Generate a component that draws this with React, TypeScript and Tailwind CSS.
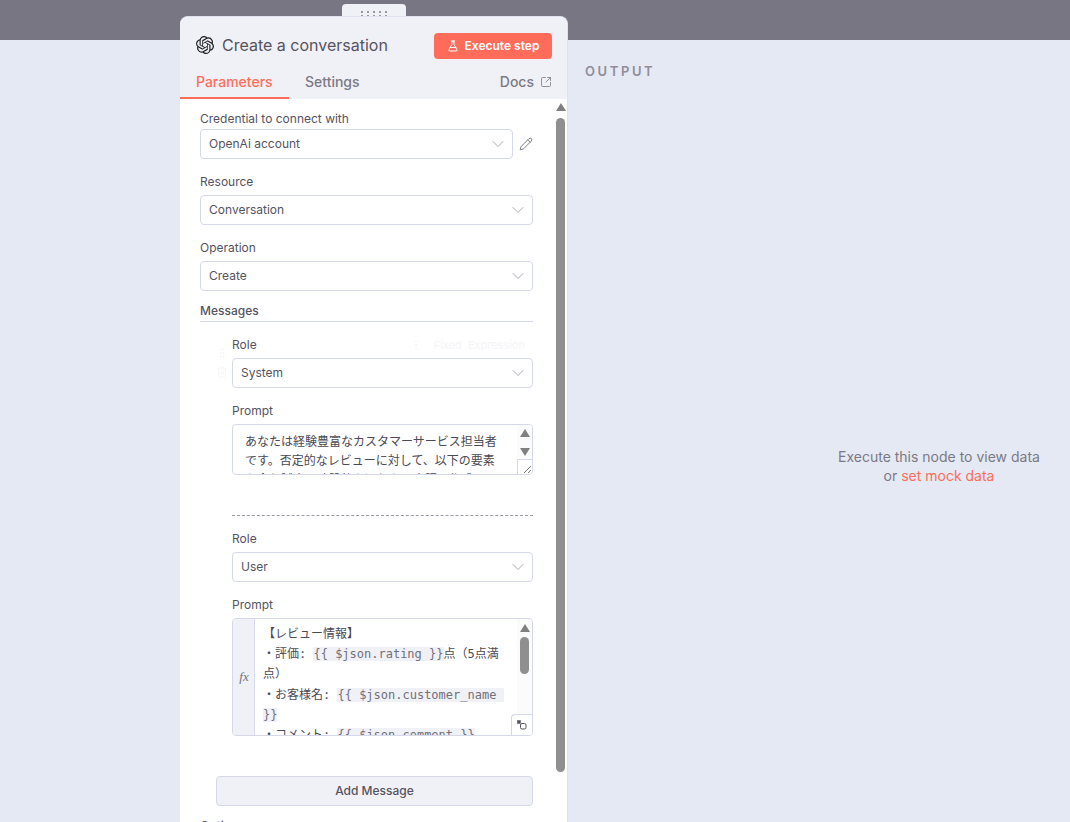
import { ChevronDown, FlaskConical, Pencil, SquareArrowOutUpRight, GripVertical, Trash2, EllipsisVertical } from 'lucide-react'
import { SiOpenai } from 'react-icons/si'

const Triangle = ({ down, className = '' }: { down?: boolean; className?: string }) => (
  <svg width="10" height="8" viewBox="0 0 10 8" className={className}>
    <path d={down ? 'M0 0h10L5 8z' : 'M5 0l5 8H0z'} fill="#7f7f7f" />
  </svg>
)

function Select({ value, className = '' }: { value: string; className?: string }) {
  return (
    <div className={`flex h-[30px] items-center justify-between rounded-[4px] border border-[#d5d8e8] bg-white pl-2 pr-[4px] text-[12px] text-[#55535f] ${className}`}>
      <span>{value}</span>
      <ChevronDown size={20} strokeWidth={1} className="text-[#9a98a3]" />
    </div>
  )
}

const Label = ({ children, className = '' }: { children: string; className?: string }) => (
  <div className={`text-[12px] leading-[16px] text-[#55535f] ${className}`}>{children}</div>
)

const Expr = ({ children }: { children: string }) => (
  <span className="bg-[#f0f1f6] text-[#71707c]">{children}</span>
)

export default function App() {
  return (
    <div className="flex h-[822px] flex-col overflow-hidden bg-[#e5e9f3] font-['Inter','Noto_Sans_CJK_JP',sans-serif]">
      <div className="h-10 shrink-0 bg-[#787682]" />
      <div className="flex min-h-0 flex-1">
        <div className="-mt-9 ml-[180px] flex w-[388px] shrink-0 flex-col items-center">
          <div className="flex h-3 w-16 shrink-0 justify-center rounded-t-[4px] bg-[#f0f1f6] pt-[7px]">
            <div className="grid h-[6px] grid-cols-5 gap-x-[4px] gap-y-[2px]">
              {Array.from({ length: 10 }).map((_, i) => (
                <span key={i} className="h-[2px] w-[2px] bg-[#9a98a3]" />
              ))}
            </div>
          </div>
          <div className="flex w-full min-h-0 flex-1 flex-col overflow-hidden rounded-t-[8px] border-r border-t border-[#dfe2ee] bg-white">
            <div className="shrink-0 bg-[#f0f1f6]">
              <div className="flex items-center justify-between pl-[16px] pr-[15px] pt-[16px]">
                <div className="flex items-center gap-[8px] pb-[2px]">
                  <SiOpenai size={18} className="text-[#1f1e26]" />
                  <span className="text-[16px] font-normal leading-[24px] text-[#55535f]">Create a conversation</span>
                </div>
                <div className="flex h-[26px] w-[118px] items-center justify-center gap-[6px] rounded-[4px] bg-[#ff6d5a] text-[12px] font-semibold text-white">
                  <FlaskConical size={12} strokeWidth={2} />
                  <span>Execute step</span>
                </div>
              </div>
              <div className="mt-[10px] flex h-[30px] items-start justify-between pr-[15px]">
                <div className="flex h-[30px] text-[14px] font-medium">
                  <div className="w-[109px] border-b-2 border-[#ff6d5a] pl-[16px] pt-[3px] leading-[20px] text-[#ff6d5a]">Parameters</div>
                  <div className="pl-[16px] pt-[3px] leading-[20px] text-[#7b7985]">Settings</div>
                </div>
                <div className="flex items-center gap-[6px] pt-[3px] text-[14px] font-medium leading-[20px] text-[#7b7985]">
                  Docs
                  <SquareArrowOutUpRight size={12} strokeWidth={1.6} />
                </div>
              </div>
            </div>

            <div className="flex min-h-0 flex-1">
              <div className="w-[354px] shrink-0 pl-[20px] pt-[12px]">
                <Label>Credential to connect with</Label>
                <div className="mt-[2px] flex items-center">
                  <Select value="OpenAi account" className="w-[313px]" />
                  <Pencil size={14} strokeWidth={1.2} className="ml-[6px] text-[#4a4954]" />
                </div>
                <Label className="mt-[15px]">Resource</Label>
                <Select value="Conversation" className="mt-[5px] w-[333px]" />
                <Label className="mt-[15px]">Operation</Label>
                <Select value="Create" className="mt-[5px] w-[333px]" />
                <div className="mt-[12px] w-[333px] border-b border-[#d5d8e8] pb-[2px]">
                  <div className="text-[12px] font-medium leading-[16px] text-[#55535f]">Messages</div>
                </div>

                <div className="relative mt-[15px] ml-[32px] w-[301px]">
                  <div className="absolute -left-[16px] top-[10px] flex flex-col gap-[7px] text-[#f6f6f8]">
                    <GripVertical size={12} />
                    <Trash2 size={12} />
                  </div>
                  <div className="absolute right-[2px] top-0 flex items-center gap-[6px] text-[11px] text-[#f4f4f7]">
                    <EllipsisVertical size={12} />
                    <span className="rounded-[4px] px-[6px] leading-[16px]">Fixed &nbsp;Expression</span>
                  </div>
                  <Label>Role</Label>
                  <Select value="System" className="mt-[5px]" />
                  <Label className="mt-[15px]">Prompt</Label>
                  <div className="relative mt-[5px] h-[51px] overflow-hidden rounded-[4px] border border-[#d5d8e8] bg-white pl-[12px] pr-[31px] pt-[7px] text-[12px] leading-[19px] text-[#4a4954]">
                    あなたは経験豊富なカスタマーサービス担当者です。否定的なレビューに対して、以下の要素を含む誠実で建設的な返信を日本語で作成してください
                    <div className="absolute right-0 top-0 flex h-full w-[15px] flex-col items-center gap-[11px] bg-[#fbfbfb] pt-[4px]">
                      <Triangle />
                      <Triangle down />
                    </div>
                    <div className="absolute bottom-0 right-0 flex h-[15px] w-[15px] items-end justify-end border-l border-t border-[#d5d8e8] bg-white">
                      <svg width="10" height="10" viewBox="0 0 10 10" stroke="#777" strokeWidth="1"><path d="M9 2 2 9M9 6 6 9" /></svg>
                    </div>
                  </div>
                  <div className="mt-[40px] border-t border-dashed border-[#9b9aa4]" />
                  <Label className="mt-[15px]">Role</Label>
                  <Select value="User" className="mt-[5px]" />
                  <Label className="mt-[15px]">Prompt</Label>
                  <div className="relative mt-[5px] flex h-[118px] overflow-hidden rounded-[4px] border border-[#d5d8e8] bg-white">
                    <div className="flex w-[22px] shrink-0 items-center justify-center border-r border-[#d5d8e8] bg-[#f0f1f6] pl-[1px] font-['Liberation_Serif',serif] text-[13px] italic text-[#71707c]">fx</div>
                    <div className="w-[250px] pl-[8px] pt-[5px] font-['DejaVu_Sans_Mono','Noto_Sans_CJK_JP',monospace] text-[12px] leading-[20.2px] text-[#4a4954]">
                      <div>【レビュー情報】</div>
                      <div>・評価: <Expr>{'{{ $json.rating }}'}</Expr>点（5点満点）</div>
                      <div>・お客様名: <Expr>{'{{ $json.customer_name\u00a0'}</Expr><wbr /><Expr>{'}}'}</Expr></div>
                      <div>・コメント: <Expr>{'{{ $json.comment }}'}</Expr></div>
                    </div>
                    <div className="absolute right-0 top-0 flex h-full w-[15px] flex-col items-center bg-[#fbfbfb] pt-[5px]">
                      <Triangle />
                      <div className="mt-[5px] h-[37px] w-[9px] rounded-full bg-[#8f8f8f]" />
                    </div>
                    <div className="absolute bottom-0 right-0 flex h-[21px] w-[21px] items-center justify-center rounded-tl-[4px] border-l border-t border-[#d5d8e8] bg-white">
                      <svg width="10" height="10" viewBox="0 0 10 10" fill="none" stroke="#55535f" strokeWidth="1">
                        <rect x="0.500" y="0.500" width="3" height="3" fill="#55535f" strokeWidth="0.500" />
                        <rect x="3.500" y="3.500" width="5.500" height="5.500" rx="1.500" />
                      </svg>
                    </div>
                  </div>
                </div>

                <div className="mt-[40px] ml-[16px] flex h-[30px] w-[317px] items-center justify-center rounded-[4px] border border-[#d5d8e8] bg-[#f0f1f6] text-[12px] font-medium text-[#55535f]">
                  Add Message
                </div>
                <div className="mt-[12px] text-[12px] font-medium leading-[16px] text-[#55535f]">Options</div>
              </div>
              <div className="ml-[19px] flex w-[15px] shrink-0 flex-col items-center pt-[4px]">
                <Triangle />
                <div className="mt-[7px] h-[654px] w-[9px] rounded-full bg-[#8f8f8f]" />
              </div>
            </div>
          </div>
        </div>

        <div className="flex min-w-0 flex-1 flex-col">
          <div className="pl-[17px] pt-[23px] text-[13px] font-semibold leading-[17px] tracking-[0.2em] text-[#8f8d99]">OUTPUT</div>
          <div className="ml-[261px] mt-[367px] w-[220px] text-center text-[14px] leading-[19px] text-[#7b7985]">
            Execute this node to view data
            <br />
            or <span className="text-[#ff6d5a]">set mock data</span>
          </div>
        </div>
      </div>
    </div>
  )
}
